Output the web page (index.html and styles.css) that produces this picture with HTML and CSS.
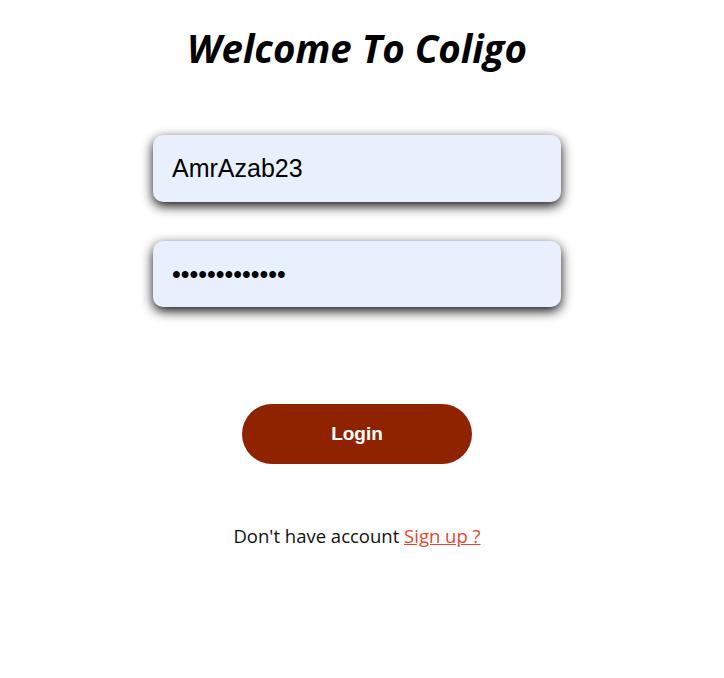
FILE: index.html
```html
<!DOCTYPE html>
<html>
<head>
<meta charset="utf-8">
<link rel="stylesheet" href="styles.css">
</head>
<body>
<main class="page">
  <h1 class="title">Welcome To Coligo</h1>
  <form class="form">
    <input class="field" type="text" value="AmrAzab23">
    <input class="field" type="password" value="amrazab123456">
    <button class="login" type="button">Login</button>
  </form>
  <p class="footer">Don't have account <a href="#" class="signup">Sign up ?</a></p>
</main>
</body>
</html>
```
FILE: styles.css
```css
* { box-sizing: border-box; }
body {
  margin: 0;
  background: #fff;
}
.page {
  width: 714px;
  display: flex;
  flex-direction: column;
  align-items: center;
  padding-top: 24px;
}
.title {
  margin: 0;
  font-family: "Open Sans", sans-serif;
  font-style: italic;
  font-weight: 700;
  font-size: 38.5px;
  line-height: 48px;
  color: #000;
}
.form {
  display: flex;
  flex-direction: column;
  align-items: center;
  margin-top: 63px;
}
.field {
  width: 408px;
  height: 67px;
  border: none;
  border-radius: 10px;
  background: #e8f0fe;
  box-shadow: 0 4px 12px rgba(0,0,0,0.95);
  padding: 0 19px;
  font-family: "Liberation Sans", Arial, sans-serif;
  font-size: 25px;
  color: #000;
  outline: none;
  margin-bottom: 39px;
}
.field:nth-child(2) { height: 66px; }
.login {
  margin-top: 58px;
  width: 230px;
  height: 60px;
  border: none;
  border-radius: 30px;
  background: #8f2300;
  color: #fff;
  font-family: "Liberation Sans", Arial, sans-serif;
  font-weight: 700;
  font-size: 19px;
}
.footer {
  margin: 59px 0 0;
  font-family: "Open Sans", sans-serif;
  font-size: 18.5px;
  color: #111;
}
.signup {
  color: #e8452f;
  text-decoration: underline;
}
```
